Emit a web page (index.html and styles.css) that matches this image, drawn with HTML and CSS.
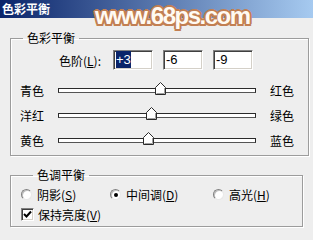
FILE: index.html
```html
<!DOCTYPE html>
<html lang="zh-CN">
<head>
    <meta charset="UTF-8">
    <title>色彩平衡</title>
    <link rel="stylesheet" href="styles.css">
</head>
<body>
    <div class="window">
        <div class="titlebar"><span class="title">色彩平衡</span></div>
        <div class="watermark">www.68ps.com</div>

        <fieldset class="group group-balance">
            <legend>色彩平衡</legend>
            <div class="levels">
                <label class="levels-label">色阶(<u>L</u>):</label>
                <span class="field"><span class="sel">+3</span></span>
                <span class="field">-6</span>
                <span class="field">-9</span>
            </div>

            <div class="slider-row">
                <span class="side-label">青色</span>
                <div class="track">
                    <span class="thumb" style="left: 51.5%">
                        <svg width="11" height="13" viewBox="0 0 11 13"><polygon points="5.5,0.5 10.5,5.5 10.5,12.5 0.5,12.5 0.5,5.5" fill="#fff" stroke="#2a2a2a"/><polyline points="9.5,6 9.5,11.5 1.5,11.5" fill="none" stroke="#a0a0a0"/></svg>
                    </span>
                </div>
                <span class="side-label right">红色</span>
            </div>
            <div class="slider-row">
                <span class="side-label">洋红</span>
                <div class="track">
                    <span class="thumb" style="left: 47%">
                        <svg width="11" height="13" viewBox="0 0 11 13"><polygon points="5.5,0.5 10.5,5.5 10.5,12.5 0.5,12.5 0.5,5.5" fill="#fff" stroke="#2a2a2a"/><polyline points="9.5,6 9.5,11.5 1.5,11.5" fill="none" stroke="#a0a0a0"/></svg>
                    </span>
                </div>
                <span class="side-label right">绿色</span>
            </div>
            <div class="slider-row">
                <span class="side-label">黄色</span>
                <div class="track">
                    <span class="thumb" style="left: 45.5%">
                        <svg width="11" height="13" viewBox="0 0 11 13"><polygon points="5.5,0.5 10.5,5.5 10.5,12.5 0.5,12.5 0.5,5.5" fill="#fff" stroke="#2a2a2a"/><polyline points="9.5,6 9.5,11.5 1.5,11.5" fill="none" stroke="#a0a0a0"/></svg>
                    </span>
                </div>
                <span class="side-label right">蓝色</span>
            </div>
        </fieldset>

        <fieldset class="group group-tone">
            <legend>色调平衡</legend>
            <div class="radios">
                <span class="option opt-1"><span class="radio"></span>阴影(<u>S</u>)</span>
                <span class="option opt-2"><span class="radio checked"></span>中间调(<u>D</u>)</span>
                <span class="option"><span class="radio"></span>高光(<u>H</u>)</span>
            </div>
            <div class="check-row">
                <span class="checkbox">
                    <svg width="9" height="9" viewBox="0 0 9 9"><polyline points="1,4 3.5,6.5 8,1.5" fill="none" stroke="#000" stroke-width="2"/></svg>
                </span>
                保持亮度(<u>V</u>)
            </div>
        </fieldset>
    </div>
</body>
</html>
```

FILE: styles.css
```css
body {
    margin: 0;
    background: #eeeeee;
    font-family: "Noto Sans CJK SC", sans-serif;
    font-size: 12px;
    color: #000;
}

.window {
    position: relative;
    width: 313px;
    height: 240px;
    overflow: hidden;
}

.titlebar {
    height: 18px;
    background: linear-gradient(to right, #0a246a, #a6caf0);
    display: flex;
    align-items: center;
    padding-left: 2px;
}

.title {
    color: #fff;
    font-weight: bold;
    font-size: 12px;
    line-height: 14px;
}

/* watermark lies over the title bar */
.watermark {
    position: absolute;
    left: 95px;
    top: 3px;
    font-family: "Liberation Sans", sans-serif;
    font-weight: bold;
    font-size: 24px;
    line-height: 26px;
    letter-spacing: -1.5px;
    color: #fffaf2;
    text-shadow:
        2px 0 0 #c27f52, -2px 0 0 #c27f52, 0 2px 0 #c27f52, 0 -2px 0 #c27f52,
        1.5px 1.5px 0 #c27f52, -1.5px 1.5px 0 #c27f52, 1.5px -1.5px 0 #c27f52, -1.5px -1.5px 0 #c27f52;
}

.group {
    box-sizing: border-box;
    width: 293px;
    margin: 0 0 0 10px;
    padding: 0;
    border: 1px solid #9c9c9c;
    box-shadow: inset 1px 1px #fff, 1px 1px #fff;
}

.group legend {
    margin-left: 12px;
    padding: 0 4px;
    line-height: 14px;
}

.group-balance {
    margin-top: 13px;
    padding-bottom: 2px;
}

.levels {
    display: flex;
    align-items: center;
    margin-top: 5px;
    margin-bottom: 8px;
    height: 20px;
}

.levels-label {
    width: 90px;
    text-align: right;
    margin-right: 12px;
}

.field {
    box-sizing: border-box;
    width: 40px;
    height: 20px;
    margin-right: 10px;
    background: #fff;
    border: 1px solid;
    border-color: #808080 #fff #fff #808080;
    box-shadow: inset 1px 1px #404040, inset -1px -1px #d4d0c8;
    font-family: "Liberation Sans", sans-serif;
    font-size: 13px;
    line-height: 18px;
    padding-left: 2px;
}

.sel {
    background: #0a246a;
    color: #fff;
    padding: 1px 0;
}

.slider-row {
    display: flex;
    align-items: center;
    height: 25px;
    padding-left: 9px;
}

.side-label {
    width: 38px;
}

.side-label.right {
    margin-left: 14px;
}

.track {
    position: relative;
    box-sizing: border-box;
    width: 198px;
    height: 5px;
    background: #fff;
    border: 1px solid #2a2a2a;
    border-bottom-color: #555;
}

.thumb {
    position: absolute;
    top: -7px;
    margin-left: -5px;
    width: 11px;
    height: 13px;
    line-height: 0;
}

.group-tone {
    margin-top: 12px;
    padding: 2px 0 2px 10px;
}

.radios,
.check-row {
    display: flex;
    align-items: center;
    height: 20px;
}

.option {
    display: flex;
    align-items: center;
}

.opt-1 {
    width: 89px;
}

.opt-2 {
    width: 103px;
}

.radio {
    position: relative;
    box-sizing: border-box;
    width: 11px;
    height: 11px;
    margin-right: 5px;
    border-radius: 50%;
    background: #fff;
    border: 1px solid;
    border-color: #808080 #e8e8e8 #e8e8e8 #808080;
    box-shadow: inset 1px 1px #c0c0c0;
}

.radio.checked::after {
    content: "";
    position: absolute;
    left: 3px;
    top: 3px;
    width: 4px;
    height: 4px;
    border-radius: 50%;
    background: #000;
}

.checkbox {
    box-sizing: border-box;
    width: 13px;
    height: 13px;
    margin-right: 4px;
    background: #fff;
    border: 1px solid;
    border-color: #808080 #fff #fff #808080;
    box-shadow: inset 1px 1px #404040, inset -1px -1px #d4d0c8;
    display: flex;
    align-items: center;
    justify-content: center;
}
```
